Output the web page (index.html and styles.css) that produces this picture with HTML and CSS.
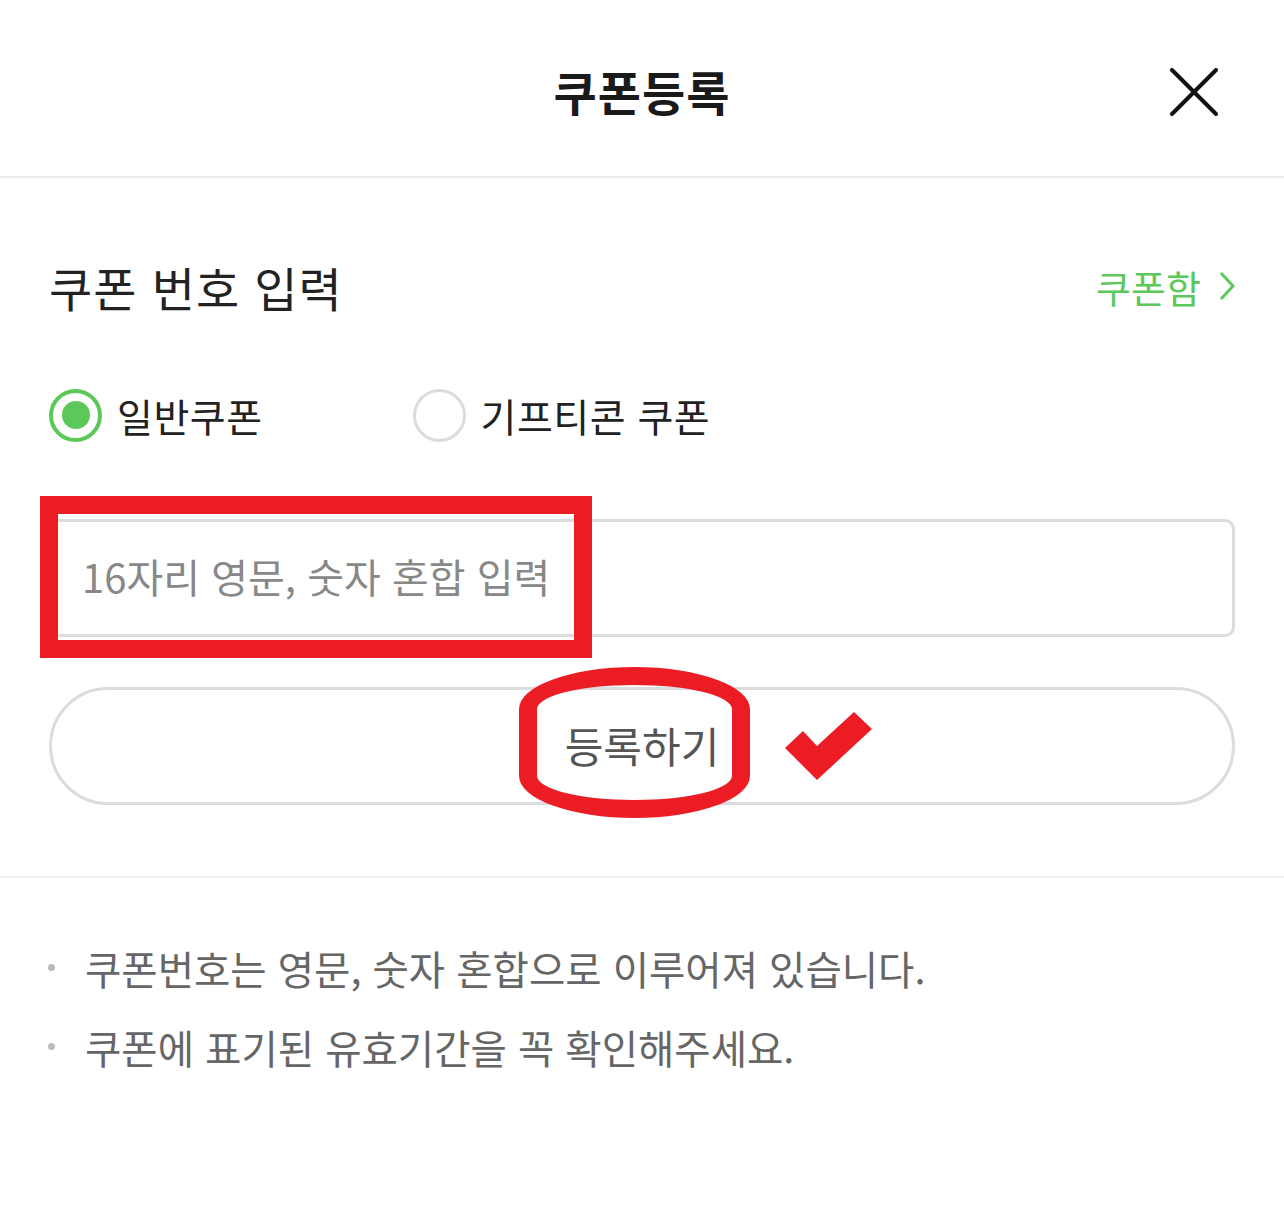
FILE: index.html
```html
<!doctype html>
<html lang="ko">
	<head>
		<meta name="viewport" content="width=device-width,initial-scale=1" />
		<title>쿠폰등록</title>
		<link rel="stylesheet" href="styles.css">
	</head>
	<body>
		<header class="top">
			<span></span>
			<h1 class="top-title">쿠폰등록</h1>
			<button type="button" class="top-close" aria-label="닫기">
				<svg width="48" height="48" viewBox="0 0 48 48"><path d="M2 2L46 46M46 2L2 46" stroke="#111" stroke-width="4" stroke-linecap="round" /></svg>
			</button>
		</header>

		<main class="coupon">
			<div class="coupon-head">
				<h2 class="coupon-heading">쿠폰 번호 입력</h2>
				<a href="#" class="coupon-box">쿠폰함
					<svg width="16" height="30" viewBox="0 0 16 30"><path d="M2 2L14 15L2 28" fill="none" stroke="#5bc859" stroke-width="3" /></svg>
				</a>
			</div>

			<div class="kinds">
				<label class="kind is-checked"><span class="kind-dot"></span>일반쿠폰</label>
				<label class="kind"><span class="kind-dot"></span>기프티콘 쿠폰</label>
			</div>

			<div class="code">
				<input type="text" class="code-input" placeholder="16자리 영문, 숫자 혼합 입력" />
				<span class="mark-box"></span>
			</div>

			<button type="button" class="submit">
				등록하기
				<span class="mark-oval"></span>
				<svg class="mark-check" width="87" height="68" viewBox="0 0 87 68"><polygon points="0,36 18,19 32,34 69,0 87,17 32,68" fill="#ec1c24" /></svg>
			</button>
		</main>

		<ul class="notes">
			<li>쿠폰번호는 영문, 숫자 혼합으로 이루어져 있습니다.</li>
			<li>쿠폰에 표기된 유효기간을 꼭 확인해주세요.</li>
		</ul>
	</body>
</html>
```

FILE: styles.css
```css
body {
	margin: 0;
	background: #fff;
	color: #222;
	font-family: "Noto Sans CJK KR", "Noto Sans", sans-serif;
}

.top {
	display: grid;
	grid-template-columns: 1fr auto 1fr;
	align-items: center;
	box-sizing: border-box;
	height: 178px;
	border-bottom: 2px solid #ebebeb;
}

.top-title {
	margin: 0;
	padding-top: 4px;
	font-size: 47px;
	font-weight: 700;
	letter-spacing: 1px;
	color: #1a1a1a;
}

.top-close {
	justify-self: end;
	margin-right: 66px;
	margin-top: 7px;
	padding: 0;
	border: 0;
	background: none;
	line-height: 0;
}

.coupon {
	padding: 80px 49px 71px;
	border-bottom: 2px solid #f0f0f0;
}

.coupon-head {
	display: flex;
	align-items: center;
	justify-content: space-between;
	height: 56px;
}

.coupon-heading {
	margin: 0;
	font-size: 47px;
	font-weight: 400;
	letter-spacing: 1px;
	color: #222;
}

.coupon-box {
	display: flex;
	align-items: center;
	gap: 18px;
	color: #5bc859;
	font-size: 38px;
	text-decoration: none;
}

.kinds {
	display: flex;
	margin-top: 73px;
	height: 56px;
	align-items: center;
}

.kind {
	display: flex;
	align-items: center;
	gap: 15px;
	font-size: 39px;
	letter-spacing: 0.5px;
	color: #222;
}

.kind + .kind {
	margin-left: 150px;
}

.kind-dot {
	box-sizing: border-box;
	width: 53px;
	height: 53px;
	border: 3px solid #dcdcdc;
	border-radius: 50%;
	display: grid;
	place-items: center;
}

.is-checked .kind-dot {
	border: 4px solid #5bc859;
}

.is-checked .kind-dot::after {
	content: "";
	width: 28px;
	height: 28px;
	border-radius: 50%;
	background: #5bc859;
}

.code {
	position: relative;
	margin-top: 76px;
}

.code-input {
	display: block;
	box-sizing: border-box;
	width: 100%;
	height: 118px;
	padding: 0 30px 4px;
	border: 3px solid #dcdcdc;
	border-radius: 10px;
	font: inherit;
	font-size: 40px;
	color: #222;
	background: #fff;

	&::placeholder {
		color: #888;
	}
}

.mark-box {
	position: absolute;
	left: -9px;
	top: -23px;
	width: 552px;
	height: 162px;
	box-sizing: border-box;
	border: 18px solid #ec1c24;
}

.submit {
	position: relative;
	display: block;
	box-sizing: border-box;
	width: 100%;
	height: 118px;
	margin-top: 50px;
	padding-bottom: 4px;
	border: 3px solid #dcdcdc;
	border-radius: 59px;
	background: #fff;
	font: inherit;
	font-size: 42px;
	color: #555;
}

.mark-oval {
	position: absolute;
	left: 467px;
	top: -23px;
	width: 231px;
	height: 151px;
	box-sizing: border-box;
	border: 18px solid #ec1c24;
	border-radius: 50% / 28%;
}

.mark-check {
	position: absolute;
	left: 733px;
	top: 22px;
}

.notes {
	margin: 0;
	padding: 50px 0 0 85px;
	list-style: none;

	& li {
		position: relative;
		line-height: 79px;
		font-size: 39.5px;
		color: #666;
	}

	& li::before {
		content: "";
		position: absolute;
		left: -37px;
		top: 36px;
		width: 7px;
		height: 7px;
		border-radius: 50%;
		background: #bbb;
	}
}
```
